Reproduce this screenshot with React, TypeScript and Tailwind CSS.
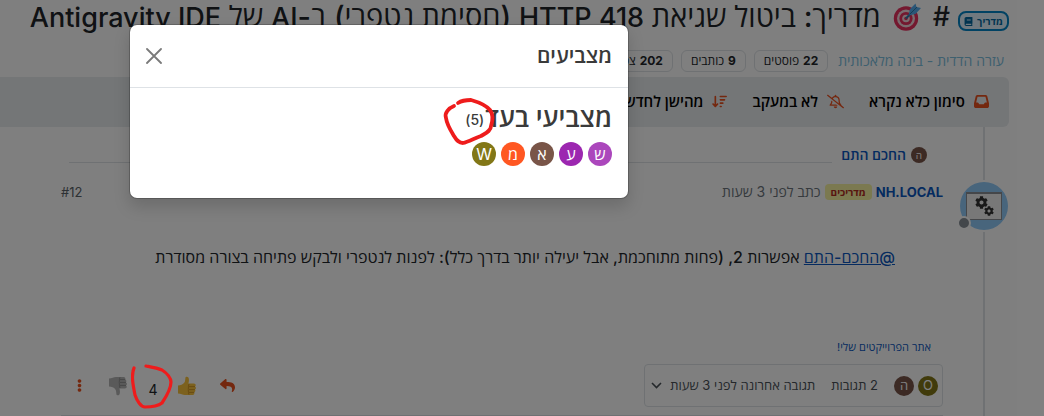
import React from 'react';
import { FaReply, FaEllipsisV, FaBook, FaCog } from 'react-icons/fa';
import { FaArrowDownWideShort, FaInbox, FaRegBellSlash } from 'react-icons/fa6';

const voters = [
  { letter: 'ש', color: 'bg-[#ab47bc]' },
  { letter: 'ע', color: 'bg-[#9c27b0]' },
  { letter: 'א', color: 'bg-[#795548]' },
  { letter: 'מ', color: 'bg-[#ff5722]' },
  { letter: 'W', color: 'bg-[#827717]' },
];

const stats = [
  { value: '22', label: 'פוסטים' },
  { value: '9', label: 'כותבים' },
  { value: '202', label: 'צפיות' },
];

const TargetIcon = () => (
  <svg width="28" height="28" viewBox="0 0 28 28" className="shrink-0" aria-hidden="true">
    <circle cx="13" cy="15.5" r="12.2" fill="#e8305f" />
    <circle cx="13" cy="15.5" r="9" fill="#f3d9df" />
    <circle cx="13" cy="15.5" r="6.6" fill="#e8305f" />
    <circle cx="13" cy="15.5" r="3.8" fill="#f3d9df" />
    <circle cx="13" cy="15.5" r="1.8" fill="#e8305f" />
    <path d="M13 15.5 L21 7" stroke="#2f78a8" strokeWidth="2" />
    <path d="M15.5 12.5 L17 6 L22.5 0.5 L23.5 4 L28 5 L22.5 11 Z" fill="#55acee" />
    <path d="M16.5 11.5 L24 4" stroke="#2f78a8" strokeWidth="1" />
  </svg>
);

const ThumbIcon = ({ tone, dark, className }: { tone: string; dark: string; className?: string }) => (
  <svg width="20" height="20" viewBox="0 0 20 20" className={className} aria-hidden="true">
    <path
      d="M1 9.5 C3.5 9.5 6 8.6 7.4 6.6 C8.3 5.2 8.2 3.4 8.4 1.8 C8.6 .5 10.6 .3 11.4 1.6 C12.3 3.2 12 5.6 11.4 7.6 L17 7.6 C19 7.8 19.3 10 18 10.6 C19.5 11.4 19.2 13.2 17.9 13.6 C18.9 14.5 18.4 16 17.2 16.4 C17.8 17.6 17 18.8 15.6 18.9 L8 18.9 C5.5 18.9 4 17.4 1 17.4 Z"
      fill={tone}
    />
    <path d="M12 10.6 H18 M12 13.6 H17.9 M12 16.4 H17.2 M12 8 C11 10 11 17 12 18.7" stroke={dark} strokeWidth=".8" fill="none" />
  </svg>
);

const LetterAvatar = ({ letter, color, size }: { letter: string; color: string; size: string }) => (
  <span className={`${size} ${color} flex shrink-0 items-center justify-center rounded-full text-white`}>{letter}</span>
);

const Topic = () => (
  <main className="pr-[35px] text-sm text-[#212529]">
    <h1 className="flex h-[34px] items-center whitespace-nowrap text-[29px] leading-8 font-medium">
      <span className="mt-2 flex h-5 items-center gap-1 rounded-lg border-2 border-[#0284c7] bg-[#e0f2fe] px-1 text-[10px] font-bold text-[#0369a1]">
        מדריך <FaBook size={9} />
      </span>
      <span className="mr-2 ml-3 text-[27px]">#</span>
      <TargetIcon />
      <span className="mr-3">
        מדריך: ביטול שגיאת <span className="text-[27px]">HTTP 418</span> (חסימת נטפרי) ב-<span className="text-[27px]">AI</span> של{' '}
        <span className="text-[27px]">Antigravity IDE</span>
      </span>
    </h1>

    <div className="mt-4 flex h-[22px] items-center gap-2 whitespace-nowrap text-xs">
      <a href="#category" className="mr-[5px] ml-[2px] text-sm text-[#7cc0de]">עזרה הדדית - בינה מלאכותית</a>
      {stats.map((s) => (
        <span key={s.value} className="flex h-[22px] items-center gap-1 rounded-md border border-[#dee2e6] px-[9px]">
          <b className="font-bold">{s.value}</b> {s.label}
        </span>
      ))}
    </div>

    <div className="mt-[5px] flex h-[50px] items-center gap-[25px] rounded-r-md bg-[#e9ecef] pr-5 text-[15px] font-semibold whitespace-nowrap text-black">
      <button className="flex items-center gap-[9px]">
        <FaInbox size={15} className="text-[#e8501e]" /> סימון כלא נקרא
      </button>
      <button className="flex items-center gap-[9px]">
        <FaRegBellSlash size={17} className="text-[#e8501e]" /> לא במעקב
      </button>
      <button className="flex items-center gap-[9px]">
        <FaArrowDownWideShort size={15} className="text-[#e8501e]" /> מהישן לחדש
      </button>
    </div>

    <div className="flex gap-4">
      <div className="flex w-[50px] flex-col items-center">
        <div className="h-[53px] w-[2px] bg-[#dee2e6]" />
        <div className="relative my-[2px] flex h-12 w-12 items-center justify-center rounded-full bg-[#90caf9]">
          <div dir="ltr" className="flex h-7 w-9 items-center justify-center border border-t-2 border-[#8a8f94] bg-[#f1f1f1] text-[#333]">
            <FaCog size={13} className="mb-2" />
            <FaCog size={10} className="mt-2 -ml-1" />
          </div>
          <span className="absolute bottom-0 -left-[3px] h-[14px] w-[14px] rounded-full border-2 border-white bg-[#868e96]" />
        </div>
        <div className="w-[2px] flex-1 bg-[#dee2e6]" />
      </div>

      <article className="min-w-0 flex-1 pl-[61px]">
        <div className="flex items-center gap-[5px] pt-5 pr-4">
          <LetterAvatar letter="ה" color="bg-[#795548]" size="size-4 text-[10px]" />
          <a href="#parent" className="leading-4 font-semibold text-[#0b57c0]">החכם התם</a>
          <div className="mr-1 ml-2 flex-1 self-end border-b border-[#dee2e6]" />
        </div>

        <header className="mt-[19px] flex h-5 items-center gap-1">
          <a href="#user" className="text-[13px] font-bold text-[#0b57c0]">NH.LOCAL</a>
          <span className="rounded-sm bg-[#f7f3a0] px-[6px] text-[10px] leading-4 font-bold text-[#b02a1e]">מדריכים</span>
          <span className="text-sm text-[#6c757d]">כתב לפני 3 שעות</span>
          <a href="#12" className="mr-auto text-[13px] text-[#5a6268]">#12</a>
        </header>

        <p className="mt-[43px] pr-12 text-base leading-6 font-medium">
          <a href="#mention" className="text-[#0b57c0] underline">@החכם-התם</a> אפשרות 2, (פחות מתוחכמת, אבל יעילה יותר בדרך כלל): לפנות לנטפרי ולבקש פתיחה בצורה מסודרת
        </p>

        <div className="mt-[70px] pr-3 text-[11px] leading-4">
          <a href="#projects" className="text-[#0b57c0]">אתר הפרוייקטים שלי!</a>
        </div>

        <footer className="mt-[9px] flex items-center justify-between border-b-2 border-[#dee2e6] pb-2">
          <button className="flex h-[43px] items-center rounded-sm border border-[#dee2e6] pr-1 pl-[6px] text-[13px] text-[#495057]">
            <span className="flex gap-1">
              <LetterAvatar letter="O" color="bg-[#827717]" size="size-5" />
              <LetterAvatar letter="ה" color="bg-[#795548]" size="size-5" />
            </span>
            <span className="mr-4">2 תגובות</span>
            <span className="mr-4 ml-2">תגובה אחרונה לפני 3 שעות</span>
            <svg width="11" height="7" viewBox="0 0 11 7" fill="none" stroke="currentColor" strokeWidth="1.6">
              <path d="M1 1 L5.5 5.5 L10 1" />
            </svg>
          </button>
          <div className="flex h-9 items-center">
            <button aria-label="תגובה" className="flex w-10 justify-center text-[#e8501e]"><FaReply size={15} /></button>
            <button aria-label="הצבעה בעד" className="flex w-10 justify-center"><ThumbIcon tone="#f9c23c" dark="#c88a1c" /></button>
            <button className="relative w-7 pt-2 text-center">
              4
              <svg className="absolute top-1/2 left-1/2 z-20 h-12 w-11 -translate-x-1/2 -translate-y-1/2" viewBox="132 362 44 48" fill="none" stroke="#ee1c1c" strokeWidth="3.2" strokeLinecap="round" strokeLinejoin="round">
                <path d="M135 368 C132 375 134 385 136 395 C138 401 142 407 146 407 C150 407 159 406 163 403 C167 397 172 388 172 382 C172 378 168 373 163 370 C158 368 152 367 147 366" />
              </svg>
            </button>
            <button aria-label="הצבעה נגד" className="flex w-[42px] justify-center"><ThumbIcon tone="#b5b5b5" dark="#858585" className="-scale-y-100" /></button>
            <button aria-label="עוד" className="flex w-9 justify-center text-[#e8501e]"><FaEllipsisV size={13} /></button>
          </div>
        </footer>
      </article>
    </div>
  </main>
);

const VotersModal = () => (
  <div className="absolute inset-0 z-10 flex items-start justify-end bg-black/50 pt-6 pl-[129px]">
    <section role="dialog" aria-labelledby="voters-title" className="w-full max-w-[500px] rounded-lg border border-black/20 bg-white bg-clip-padding text-[#3a3a3a] shadow-[0_8px_16px_rgba(0,0,0,0.15)]">
      <div className="flex h-[63px] items-center justify-between border-b border-[#dee2e6] px-4">
        <h2 id="voters-title" className="text-[21px] font-semibold">מצביעים</h2>
        <button aria-label="סגירה" className="text-[#7a7a7a]">
          <svg width="16" height="16" viewBox="0 0 16 16" stroke="currentColor" strokeWidth="1.8" strokeLinecap="round">
            <path d="M1 1 L15 15 M15 1 L1 15" />
          </svg>
        </button>
      </div>
      <div className="px-4 pt-4 pb-8">
        <h3 className="flex items-center gap-px text-[26px] leading-7 font-semibold">
          מצביעי בעד
          <span className="relative mt-1 text-sm font-medium">
            (5)
            <svg className="absolute top-1/2 left-1/2 h-12 w-[52px] -translate-x-1/2 -translate-y-1/2" viewBox="449 97 52 48" overflow="visible" fill="none" stroke="#ee1c1c" strokeWidth="3.8" strokeLinecap="round" strokeLinejoin="round">
              <path d="M454 107 C449 109 444 114 446 119 C447 126 451 132 454 137 C457 142 459 144 463 144 C468 143 475 139 481 137 C486 134 491 132 491 127 C493 121 493 115 490 111 C486 106 478 103 471 101 C466 101 461 102 458 104" />
            </svg>
          </span>
        </h3>
        <div className="mt-[10px] flex gap-[5px]">
          {voters.map((v) => (
            <LetterAvatar key={v.letter} letter={v.letter} color={v.color} size="size-6 text-base" />
          ))}
        </div>
      </div>
    </section>
  </div>
);

export default function App() {
  return (
    <div dir="rtl" className="relative min-h-screen overflow-hidden bg-white font-['Inter','Open_Sans',sans-serif]">
      <Topic />
      <VotersModal />
    </div>
  );
}
